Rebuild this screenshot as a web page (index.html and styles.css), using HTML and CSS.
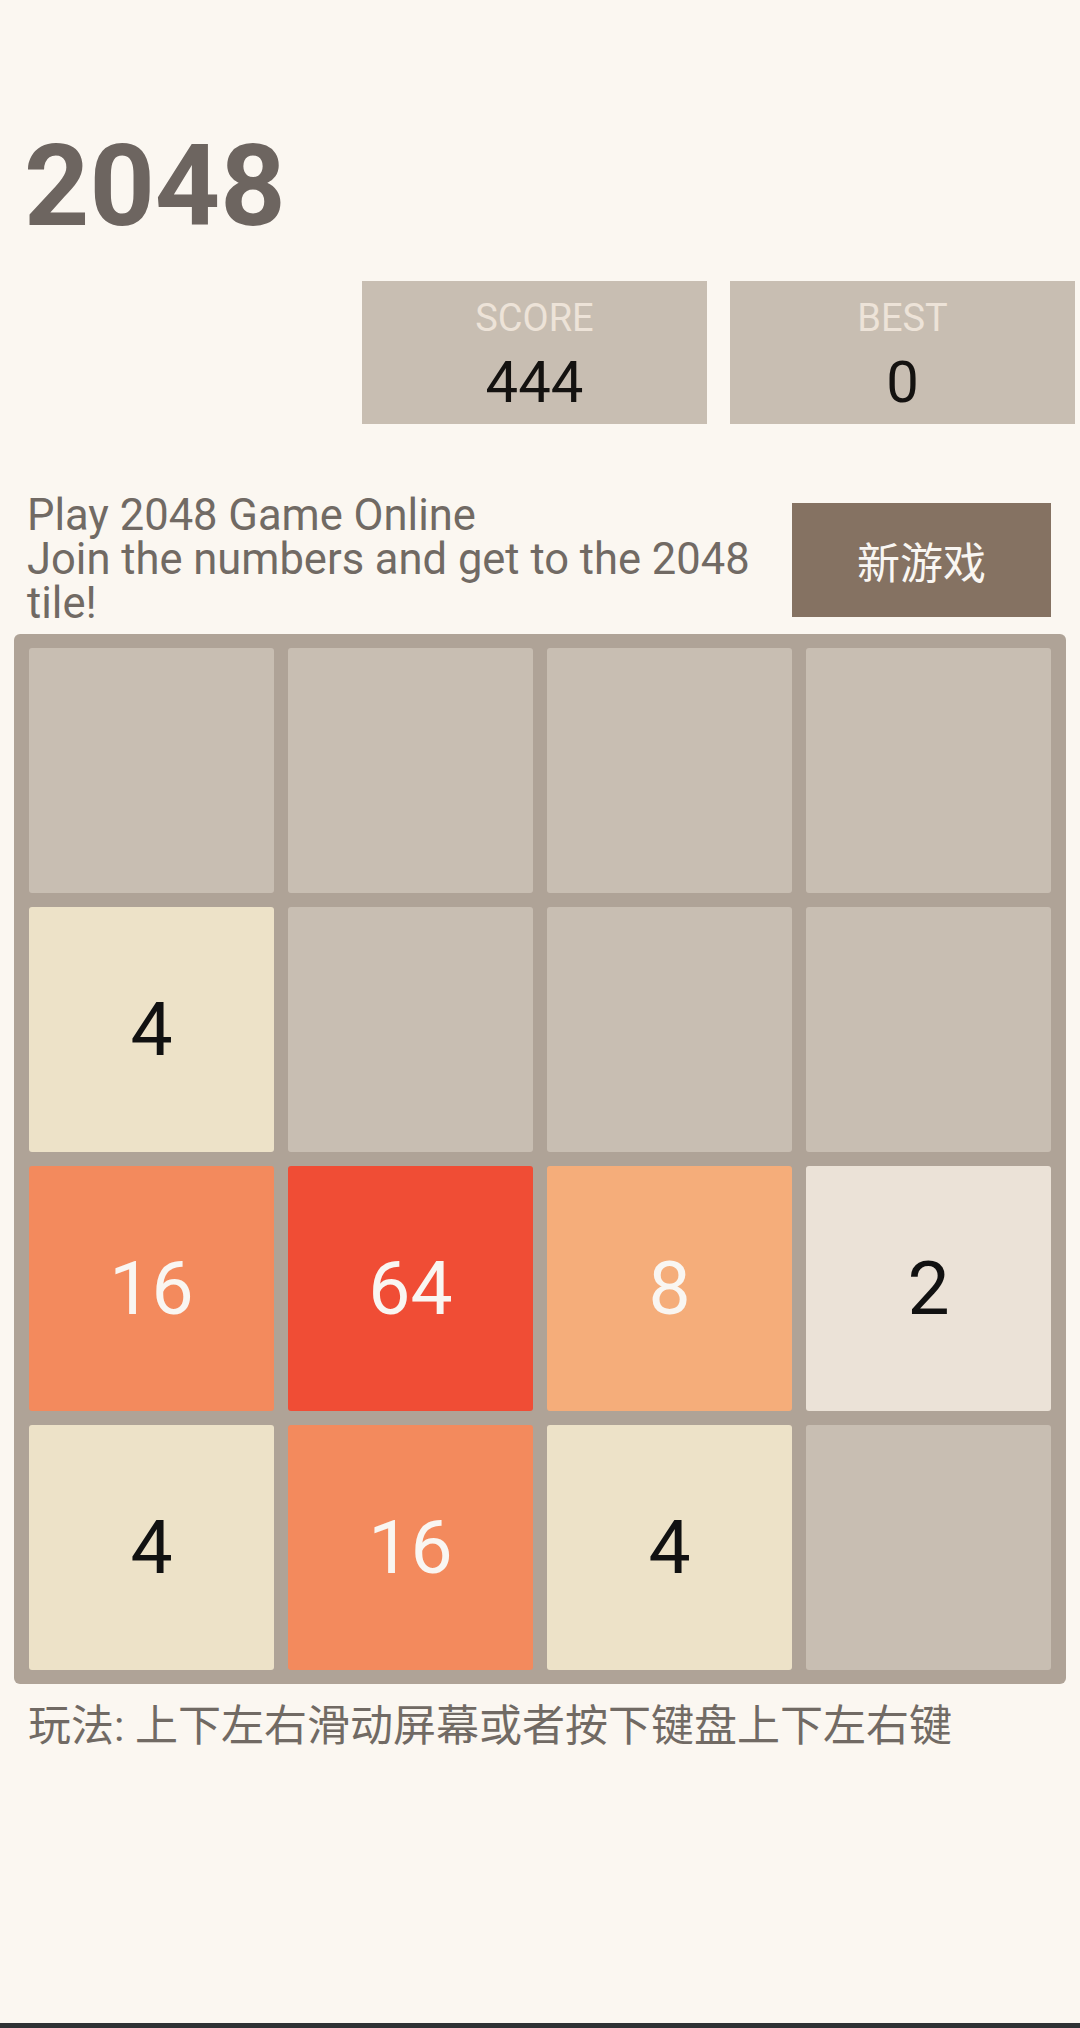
FILE: index.html
```html
<!DOCTYPE html>
<html lang="zh-CN">
<head>
    <meta charset="UTF-8">
    <meta name="viewport" content="width=device-width, initial-scale=1.0">
    <title>2048</title>
    <link rel="stylesheet" href="styles.css">
</head>
<body>
    <div class="header">
        <h1 class="title">2048</h1>
        <div class="scores">
            <div class="score-box">
                <div class="score-label">SCORE</div>
                <div class="score-value">444</div>
            </div>
            <div class="score-box">
                <div class="score-label">BEST</div>
                <div class="score-value">0</div>
            </div>
        </div>
    </div>

    <div class="intro">
        <p class="intro-text">Play 2048 Game Online<br>Join the numbers and get to the 2048 tile!</p>
        <button class="new-game">新游戏</button>
    </div>

    <div class="board">
        <div class="tile"></div>
        <div class="tile"></div>
        <div class="tile"></div>
        <div class="tile"></div>

        <div class="tile t4">4</div>
        <div class="tile"></div>
        <div class="tile"></div>
        <div class="tile"></div>

        <div class="tile t16">16</div>
        <div class="tile t64">64</div>
        <div class="tile t8">8</div>
        <div class="tile t2">2</div>

        <div class="tile t4">4</div>
        <div class="tile t16">16</div>
        <div class="tile t4">4</div>
        <div class="tile"></div>
    </div>

    <p class="how-to">玩法: 上下左右滑动屏幕或者按下键盘上下左右键</p>

    <div class="nav-strip"></div>
</body>
</html>
```

FILE: styles.css
```css
* {
    margin: 0;
    padding: 0;
    box-sizing: border-box;
}

body {
    background: #fbf7f1;
    font-family: Roboto, "Noto Sans CJK SC", sans-serif;
    color: #716a64;
    min-height: 2028px;
}

.header {
    padding: 118px 5px 0 24px;
}

.title {
    font-size: 114px;
    line-height: 1.2;
    font-weight: 700;
    color: #6d6560;
}

.scores {
    display: flex;
    justify-content: flex-end;
    gap: 23px;
    margin-top: 26px;
}

.score-box {
    width: 345px;
    height: 143px;
    background: #c8beb2;
    text-align: center;
    padding-top: 15px;
}

.score-label {
    font-size: 38px;
    line-height: 44px;
    color: #ede3d8;
}

.score-value {
    font-size: 58px;
    line-height: 66px;
    margin-top: 9px;
    color: #141210;
}

.intro {
    display: flex;
    align-items: center;
    padding: 0 29px 0 27px;
    margin-top: 70px;
}

.intro-text {
    flex: 1;
    font-size: 43.5px;
    line-height: 44px;
}

.new-game {
    width: 259px;
    height: 114px;
    border: none;
    background: #857262;
    color: #f9f6f2;
    font-family: Roboto, "Noto Sans CJK SC", sans-serif;
    font-size: 43px;
    cursor: pointer;
}

.board {
    margin: 8px 14px 0;
    padding: 14px 15px;
    background: #afa397;
    border-radius: 6px;
    display: grid;
    grid-template-columns: repeat(4, 245px);
    grid-auto-rows: 245px;
    gap: 14px;
}

.tile {
    background: #c8beb2;
    border-radius: 3px;
    display: flex;
    align-items: center;
    justify-content: center;
    font-size: 75px;
    color: #111;
}

.t2 {
    background: #ebe2d7;
}

.t4 {
    background: #ede2c8;
}

.t8 {
    background: #f5ad7a;
    color: #f9f6f2;
}

.t16 {
    background: #f38a5d;
    color: #f9f6f2;
}

.t64 {
    background: #f04d35;
    color: #f9f6f2;
}

.how-to {
    margin-top: 17px;
    padding-left: 28px;
    font-size: 43px;
    line-height: 50px;
}

.nav-strip {
    position: fixed;
    left: 0;
    right: 0;
    bottom: 0;
    height: 5px;
    background: #2e3134;
}
```
